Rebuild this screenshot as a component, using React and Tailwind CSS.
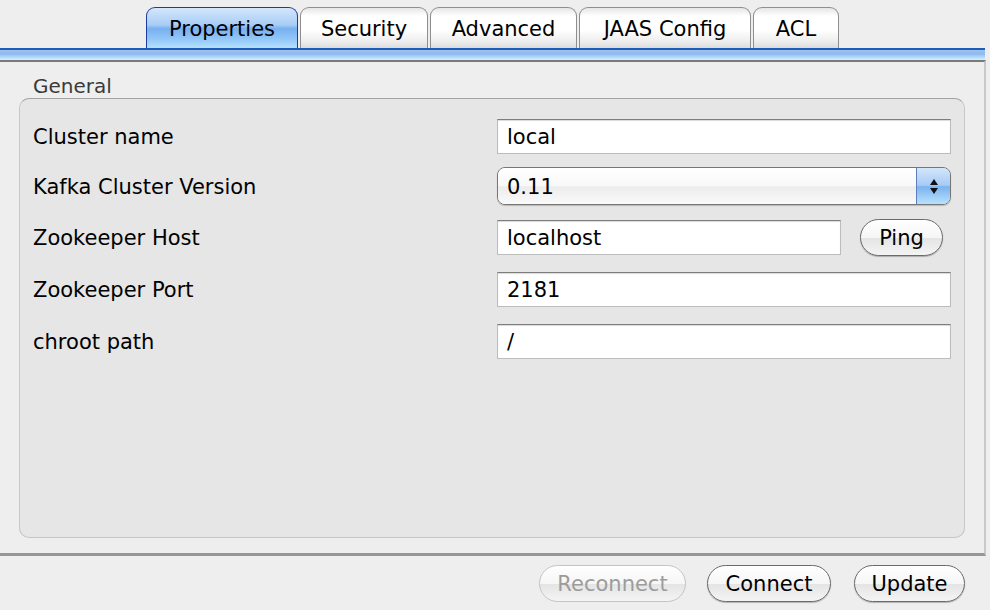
import React from 'react';

const font = { fontFamily: '"DejaVu Sans", "Lucida Grande", sans-serif' };

const tabs = [
  { label: 'Properties', w: 'w-[152px]', active: true },
  { label: 'Security', w: 'w-[128px]' },
  { label: 'Advanced', w: 'w-[147px]' },
  { label: 'JAAS Config', w: 'w-[172px]' },
  { label: 'ACL', w: 'w-[86px]' },
];

const Field = ({ value, className = 'w-[454px]' }) => (
  <div className={`${className} h-[35px] bg-white border border-[#bcbcbc] border-t-[#7d7d7d] shadow-[inset_0_1px_1px_rgba(0,0,0,0.15)] flex items-center pl-[9px] pt-[3px] text-[21px] text-black`}>
    {value}
  </div>
);

const PillButton = ({ children, disabled, className = '' }) => (
  <button
    className={`h-[37px] rounded-full border pt-[3px] text-[21px] flex items-center justify-center bg-[linear-gradient(to_bottom,#ffffff_0%,#f6f6f6_50%,#e4e4e4_51%,#f4f4f4_100%)] ${
      disabled ? 'border-[#c4c4c4] text-[#9c9c9c]' : 'border-[#6a6a6a] text-black shadow-[0_1px_1px_rgba(0,0,0,0.25)]'
    } ${className}`}
  >
    {children}
  </button>
);

const Row = ({ label, h = 'h-[52px]', children }) => (
  <div className={`flex items-center ${h}`}>
    <div className="flex-1 pt-[3px] text-[21px] text-black">{label}</div>
    <div className="w-[454px] flex items-center">{children}</div>
  </div>
);

export default function App() {
  return (
    <div style={font} className="w-[990px] h-[610px] bg-[#eeeeee] overflow-hidden flex flex-col">
      {/* tab strip */}
      <div className="h-[48px] flex items-end pl-[146px] gap-[2px]">
        {tabs.map((t) => (
          <div
            key={t.label}
            className={`${t.w} h-[41px] rounded-t-[9px] border border-b-0 flex items-center justify-center pt-[3px] text-[21px] text-black ${
              t.active
                ? 'border-[#1d3c9c] bg-[linear-gradient(to_bottom,#d4e6fb_0%,#a8cdf7_42%,#78afef_52%,#92c7f8_78%,#b6e0fd_100%)]'
                : 'border-[#8e8e8e] bg-[linear-gradient(to_bottom,#e6e6e6_0%,#ffffff_20%,#ffffff_55%,#ececec_85%,#dcdcdc_100%)]'
            }`}
          >
            {t.label}
          </div>
        ))}
      </div>
      <div className="h-[12px] w-[985px] border-t-2 border-[#1f5cba] bg-[linear-gradient(to_bottom,#9fc3ee_0%,#8dbaf0_40%,#b8dcfb_75%,#d5effd_100%)]" />

      {/* content panel */}
      <div className="w-[986px] h-[496px] border-t-2 border-t-[#7a7a7a] border-r-2 border-r-[#c8c8c8] border-b-[3px] border-b-[#979797] px-[19px] flex flex-col">
        <div className="h-[36px] flex items-center pl-[14px] pt-[11px] text-[20px] text-[#3a3a3a]">General</div>
        <div className="h-[440px] w-[946px] rounded-[10px] border border-[#c6c6c6] border-t-[#a2a2a2] bg-[#e6e6e6] pt-[12px] pl-[13px] pr-[13px]">
          <Row label="Cluster name" h="h-[50px]">
            <Field value="local" />
          </Row>
          <Row label="Kafka Cluster Version" h="h-[50px]">
            <div className="w-[454px] h-[38px] rounded-[8px] border border-[#777777] flex overflow-hidden shadow-[0_1px_1px_rgba(0,0,0,0.2)]">
              <div className="flex-1 flex items-center pl-[9px] pt-[3px] text-[21px] text-black bg-[linear-gradient(to_bottom,#ffffff_0%,#f8f8f8_50%,#ececec_52%,#fafafa_100%)]">
                0.11
              </div>
              <div className="w-[34px] border-l border-[#5d7fbf] flex flex-col items-center justify-center gap-[3px] bg-[linear-gradient(to_bottom,#d3e6fb_0%,#a6cbf5_48%,#7cb3ef_52%,#b7e1fd_100%)]">
                <svg width="8" height="6" viewBox="0 0 8 6"><path d="M4 0 L8 6 L0 6 Z" fill="#111" /></svg>
                <svg width="8" height="6" viewBox="0 0 8 6"><path d="M0 0 L8 0 L4 6 Z" fill="#111" /></svg>
              </div>
            </div>
          </Row>
          <Row label="Zookeeper Host">
            <Field value="localhost" className="w-[344px]" />
            <PillButton className="ml-[19px] w-[83px]">Ping</PillButton>
          </Row>
          <Row label="Zookeeper Port">
            <Field value="2181" />
          </Row>
          <Row label="chroot path">
            <Field value="/" />
          </Row>
        </div>
      </div>

      {/* bottom buttons */}
      <div className="flex-1 flex items-center justify-end pr-[25px] pt-[1px]">
        <PillButton disabled className="w-[147px]">Reconnect</PillButton>
        <PillButton className="ml-[21px] w-[124px]">Connect</PillButton>
        <PillButton className="ml-[23px] w-[111px]">Update</PillButton>
      </div>
    </div>
  );
}
